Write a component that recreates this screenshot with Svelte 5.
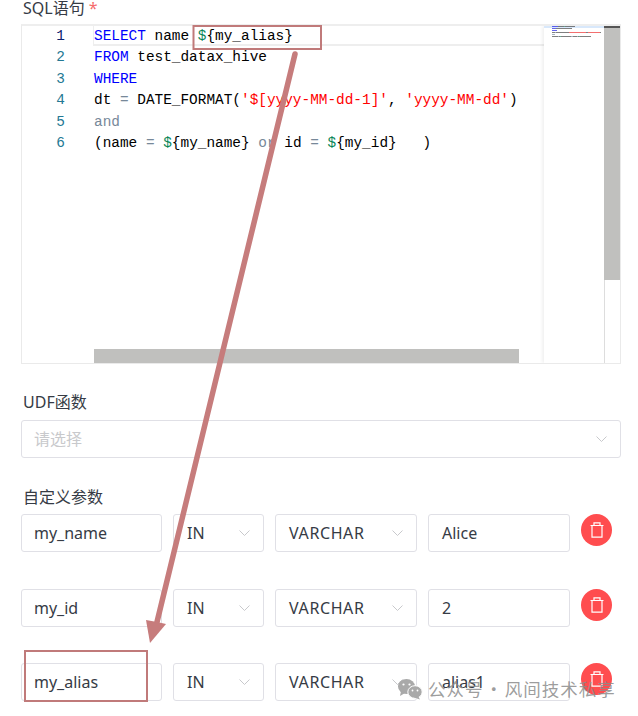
<script>
	const codeLines = [
		[['kw', 'SELECT'], ['', ' name '], ['var', '$'], ['', '{my_alias}']],
		[['kw', 'FROM'], ['', ' test_datax_hive']],
		[['kw', 'WHERE']],
		[['', 'dt '], ['op', '='], ['', ' DATE_FORMAT('], ['str', "'$[yyyy-MM-dd-1]'"], ['', ', '], ['str', "'yyyy-MM-dd'"], ['', ')']],
		[['op', 'and']],
		[['', '(name '], ['op', '='], ['', ' '], ['var', '$'], ['', '{my_name} '], ['op', 'or'], ['', ' id '], ['op', '='], ['', ' '], ['var', '$'], ['', '{my_id}   )']]
	];

	const miniColors = { kw: '#3030e8', var: '#2f9a70', str: '#f04040', op: '#8899aa', '': '#555555' };

	const params = [
		{ name: 'my_name', dir: 'IN', type: 'VARCHAR', value: 'Alice' },
		{ name: 'my_id', dir: 'IN', type: 'VARCHAR', value: '2' },
		{ name: 'my_alias', dir: 'IN', type: 'VARCHAR', value: 'alias1' }
	];
</script>

{#snippet chevron()}
	<svg class="chevron" width="11" height="6" viewBox="0 0 11 6">
		<path d="M0.5 0.5 L5.5 5.5 L10.5 0.5" fill="none" stroke="#c8c9cc" stroke-width="1" />
	</svg>
{/snippet}

<div class="page">
	<div class="label first">SQL语句 <span class="req">*</span></div>

	<div class="editor">
		<div class="gutter">
			{#each codeLines as _, i}
				<div class="num" class:active={i === 0}>{i + 1}</div>
			{/each}
		</div>
		<div class="code">
			{#each codeLines as line, i}
				<div class="line" class:current={i === 0}>
					{#each line as [cls, text]}<span class={cls}>{text}</span>{/each}
				</div>
			{/each}
		</div>
		<div class="minimap">
			<div class="mini-top"></div>
			{#each codeLines as line}
				<div class="mini-line">
					{#each line as [cls, text]}
						<span style="width: {text.length}px; background: {miniColors[cls]}"></span>
					{/each}
				</div>
			{/each}
		</div>
		<div class="vscroll"><div class="vthumb"><div class="vmark"></div></div></div>
		<div class="hthumb"></div>
	</div>

	<div class="label udf">UDF函数</div>
	<div class="field select full">
		<span class="placeholder">请选择</span>
		{@render chevron()}
	</div>

	<div class="label custom">自定义参数</div>
	<div class="rows">
		{#each params as p}
			<div class="row">
				<div class="field name">{p.name}</div>
				<div class="field select dir"><span>{p.dir}</span>{@render chevron()}</div>
				<div class="field select type"><span class="type-text">{p.type}</span>{@render chevron()}</div>
				<div class="field value">{p.value}</div>
				<div class="del">
					<svg width="14" height="16" viewBox="0 0 14 16" fill="none" stroke="#fff" stroke-width="1.2">
						<path d="M0.5 3.5 H13.5 M4 3.5 V0.8 H10 V3.5 M2 3.5 V15.2 H12 V3.5" />
					</svg>
				</div>
			</div>
		{/each}
	</div>
</div>

<svg class="overlay" width="638" height="716" viewBox="0 0 638 716">
	<rect x="193.5" y="26" width="127.5" height="23" fill="none" stroke="#c07a7a" stroke-width="2" />
	<rect x="25" y="651" width="122" height="50" fill="none" stroke="#c07a7a" stroke-width="2" />
	<path d="M295 54 L157 622" fill="none" stroke="#c67c7c" stroke-width="5.5" stroke-linecap="round" />
	<path d="M150 643 L146 620 L157 622 L166 624 Z" fill="#c67c7c" />
</svg>

<div class="watermark">
	<svg width="26" height="22" viewBox="0 0 26 22">
		<ellipse cx="9.5" cy="8.5" rx="8.5" ry="7.5" fill="#a9a9a9" />
		<path d="M4 13 L3 18 L8 15 Z" fill="#a9a9a9" />
		<ellipse cx="18" cy="14" rx="7.2" ry="6.3" fill="#a9a9a9" stroke="#fff" stroke-width="1" />
		<path d="M21 18 L23 21.5 L17 19.5 Z" fill="#a9a9a9" />
		<circle cx="6.5" cy="6.5" r="1.1" fill="#fff" />
		<circle cx="12.5" cy="6.5" r="1.1" fill="#fff" />
		<circle cx="15.5" cy="12.5" r="0.9" fill="#fff" />
		<circle cx="20.5" cy="12.5" r="0.9" fill="#fff" />
	</svg>
	<span>公众号 · 风间技术私享</span>
</div>

<style>
	:global(body) {
		margin: 0;
		background: #fff;
	}
	.page {
		width: 638px;
		height: 716px;
		box-sizing: border-box;
		padding: 0 17px 0 21px;
		overflow: hidden;
		font-family: "Noto Sans", "Noto Sans CJK SC", sans-serif;
		color: #363b45;
	}
	.label {
		font-size: 16px;
		line-height: 20px;
		padding-left: 2px;
	}
	.first {
		height: 24px;
		line-height: 16px;
	}
	.req {
		color: #f56c6c;
	}
	.udf {
		margin-top: 28px;
		margin-bottom: 8px;
	}
	.custom {
		margin-top: 29px;
		margin-bottom: 7px;
	}
	.editor {
		position: relative;
		display: flex;
		height: 340px;
		box-sizing: border-box;
		border: 1px solid #eaeaea;
		border-top: 2px solid #eeeeee;
		font-family: "Liberation Mono", "DejaVu Sans Mono", monospace;
		font-size: 14.42px;
		line-height: 21.5px;
		overflow: hidden;
	}
	.gutter {
		width: 72px;
		flex: none;
		margin-top: -0.5px;
	}
	.num {
		width: 43px;
		text-align: right;
		color: #237893;
	}
	.num.active {
		color: #0b216f;
	}
	.code {
		flex: 1;
		color: #000;
		white-space: pre;
		margin-top: -0.5px;
	}
	.line {
		height: 21.5px;
		box-sizing: border-box;
	}
	.line.current {
		height: 20px;
		margin-bottom: 1.5px;
		border-bottom: 2px solid #eeeeee;
		border-left: 1px solid #eeeeee;
		margin-left: -1px;
		margin-right: 76px;
	}
	.kw {
		color: #0000ff;
	}
	.var {
		color: #098658;
	}
	.str {
		color: #ff0000;
	}
	.op {
		color: #778899;
	}
	.minimap {
		position: absolute;
		top: 0;
		left: 522px;
		bottom: 0;
		width: 60px;
		box-sizing: border-box;
		padding-left: 8px;
		background: #fff;
		box-shadow: -2px 0 3px rgba(0, 0, 0, 0.06);
	}
	.mini-top {
		position: absolute;
		top: 0;
		left: 0;
		width: 60px;
		height: 2px;
		background: #d8e8fb;
	}
	.mini-line {
		position: relative;
		display: flex;
		height: 1px;
		margin-bottom: 1px;
		opacity: 0.75;
	}
	.mini-line span {
		display: block;
		height: 1px;
	}
	.vscroll {
		position: absolute;
		top: 0;
		left: 582px;
		bottom: 0;
		width: 16px;
		box-sizing: border-box;
		border-left: 1px solid #dddddd;
	}
	.vthumb {
		height: 254px;
		margin-left: -1px;
		background: #c0c0be;
	}
	.vmark {
		height: 2px;
		background: #555555;
	}
	.hthumb {
		position: absolute;
		left: 72px;
		bottom: 0;
		width: 425px;
		height: 14px;
		background: #c0c0be;
	}
	.field {
		height: 38px;
		box-sizing: border-box;
		border: 1px solid #e0e0e6;
		border-radius: 3px;
		display: flex;
		align-items: center;
		padding: 0 12px;
		font-size: 16px;
		flex: none;
	}
	.select {
		justify-content: space-between;
	}
	.full {
		width: 600px;
		padding-right: 13px;
	}
	.placeholder {
		color: #c8c9cc;
		font-size: 16px;
		padding-bottom: 3px;
	}
	.rows {
		display: flex;
		flex-direction: column;
		gap: 36.5px;
	}
	.row {
		display: flex;
		align-items: flex-start;
		gap: 11px;
	}
	.name {
		width: 141px;
	}
	.dir {
		width: 91px;
		padding: 0 13px;
	}
	.type {
		width: 142px;
		padding: 0 13px;
	}
	.type-text {
		letter-spacing: 0.6px;
	}
	.value {
		width: 142px;
		padding: 0 13px;
	}
	.del {
		width: 31px;
		height: 32px;
		border-radius: 50%;
		background: #ff4d4f;
		display: flex;
		align-items: center;
		justify-content: center;
		flex: none;
	}
	.overlay {
		position: absolute;
		top: 0;
		left: 0;
		pointer-events: none;
	}
	.watermark {
		position: absolute;
		left: 397px;
		top: 678px;
		display: flex;
		align-items: center;
		gap: 5px;
		color: rgba(140, 140, 140, 0.85);
		font-family: "Noto Sans CJK SC", sans-serif;
		font-size: 17.5px;
		letter-spacing: 1px;
		word-spacing: -3.5px;
		line-height: 22px;
		white-space: nowrap;
	}
</style>
